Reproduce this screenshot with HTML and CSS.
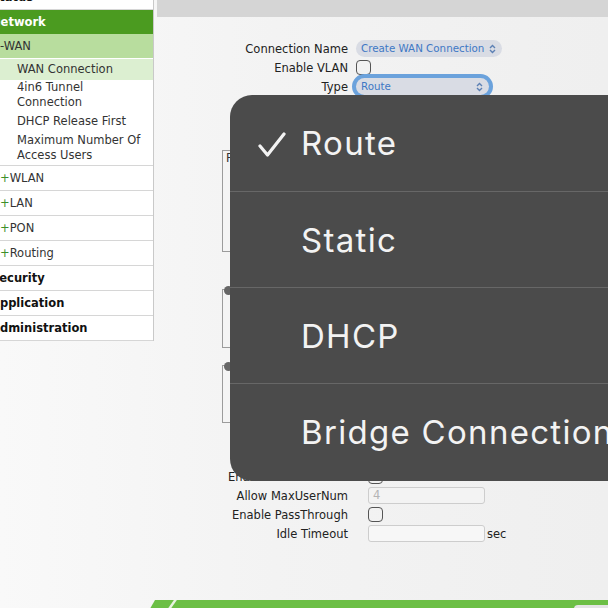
FILE: index.html
```html
<!DOCTYPE html>
<html lang="en">
  <head>
    <title>WAN Connection</title>
    <link rel="stylesheet" href="styles.css">
  </head>
  <body>
    <div class="page">
      <div class="nav">
        <div class="nav-top">Status</div>
        <div class="nav-top active">Network</div>
        <div class="nav-sub open">-WAN</div>
        <ul class="nav-leaf">
          <li class="current">WAN Connection</li>
          <li>4in6 Tunnel<br>Connection</li>
          <li>DHCP Release First</li>
          <li>Maximum Number Of<br>Access Users</li>
        </ul>
        <div class="nav-sub"><span class="plus">+</span>WLAN</div>
        <div class="nav-sub"><span class="plus">+</span>LAN</div>
        <div class="nav-sub"><span class="plus">+</span>PON</div>
        <div class="nav-sub"><span class="plus">+</span>Routing</div>
        <div class="nav-top">Security</div>
        <div class="nav-top">Application</div>
        <div class="nav-top last">Administration</div>
      </div>

      <div class="main">
        <div class="path">Path:Internet-WAN-WAN Connection</div>

        <div class="form">
          <div class="row">
            <label>Connection Name</label>
            <div class="select wide">Create WAN Connection
              <svg class="updown" width="7" height="10" viewBox="0 0 7 10"><polyline points="1,4 3.5,1.5 6,4"/><polyline points="1,6 3.5,8.5 6,6"/></svg>
            </div>
          </div>
          <div class="row">
            <label>Enable VLAN</label>
            <span class="check"></span>
          </div>
          <div class="row">
            <label>Type</label>
            <div class="select focus">Route
              <svg class="updown" width="7" height="10" viewBox="0 0 7 10"><polyline points="1,4 3.5,1.5 6,4"/><polyline points="1,6 3.5,8.5 6,6"/></svg>
            </div>
          </div>

          <div class="group g1"><span class="legend">PPP</span></div>
          <div class="group g2"><span class="dot"></span></div>
          <div class="group g3"><span class="dot"></span></div>

          <div class="lower">
            <div class="row low">
              <label>Enable MaxUserNum</label>
              <span class="check"></span>
            </div>
            <div class="row low">
              <label>Allow MaxUserNum</label>
              <span class="input disabled">4</span>
            </div>
            <div class="row low">
              <label>Enable PassThrough</label>
              <span class="check"></span>
            </div>
            <div class="row low">
              <label>Idle Timeout</label>
              <span class="field"><span class="input"></span>sec</span>
            </div>
          </div>
        </div>

        <div class="foot"></div>
      </div>
    </div>

    <div class="popup">
      <div class="option picked">
        <svg class="tick" width="28" height="26" viewBox="0 0 28 26"><polyline points="2,14 9.5,23 26,2"/></svg>
        Route
      </div>
      <div class="option">Static</div>
      <div class="option">DHCP</div>
      <div class="option">Bridge Connection</div>
    </div>
  </body>
</html>
```

FILE: styles.css
```css
html, body { margin: 0; width: 608px; height: 608px; overflow: hidden; }
body { background: linear-gradient(90deg, #f9f9f9 0%, #f3f3f3 45%, #efefef 100%); font-family: "DejaVu Sans", Verdana, sans-serif; font-size: 11.5px; color: #222; }

.page { display: flex; margin-top: -15px; align-items: flex-start; }

/* left menu */
.nav { box-sizing: border-box; width: 164px; margin-left: -10px; background: #fff; border-right: 1px solid #c9c9c9; }
.nav-top { height: 24px; line-height: 25px; padding-left: 1px; font-weight: bold; color: #111; border-bottom: 1px solid #d6d6d6; }
.nav-top.active { background: #4b9b20; color: #fff; border-bottom: 0; }
.nav-sub { height: 24px; line-height: 24px; padding-left: 10px; color: #333; border-bottom: 1px solid #d6d6d6; }
.nav-sub.open { background: #b8dd9e; border-bottom: 0; }
.plus { color: #3d8f2a; }
.nav-leaf { list-style: none; margin: 0; padding: 1px 0 0; border-bottom: 1px solid #d6d6d6; }
.nav-leaf li { padding: 2px 0 2px 27px; line-height: 15px; color: #333; }
.nav-leaf li.current { background: #dcefd1; padding: 3px 0 3px 27px; margin-bottom: -2px; }

/* main */
.main { flex: 1; margin-left: 3px; }
.path { height: 32px; background: #d5d5d5; box-sizing: border-box; padding: 3px 0 0 10px; line-height: 14px; font-weight: bold; color: #333; }
.form { padding-top: 23px; }
.row { display: grid; grid-template-columns: 191px auto; column-gap: 8px; align-items: center; height: 17px; margin-bottom: 2px; }
.row label { text-align: right; white-space: nowrap; }
.row.low { column-gap: 20px; }

.select { position: relative; box-sizing: border-box; width: 146px; height: 17px; line-height: 17px; padding-left: 5px; border-radius: 9px; background: #d9dce4; color: #3e78c4; font-size: 10.3px; }
.select.focus { width: 133px; box-shadow: 0 0 0 4px #6ba2dc; }
.updown { position: absolute; right: 6px; top: 4px; fill: none; stroke: #5c80b4; stroke-width: 1.4; }

.check { display: block; box-sizing: border-box; width: 15px; height: 15px; border: 1.5px solid #555; border-radius: 4px; }

.group { position: relative; box-sizing: border-box; margin-left: 65px; width: 320px; border: 1px solid #9b9b9b; }
.g1 { margin-top: 55px; height: 102px; }
.g2 { margin-top: 37px; height: 59px; }
.g3 { margin-top: 17px; height: 58px; }
.legend { position: absolute; left: 3px; top: 0; color: #333; }
.dot { position: absolute; left: 1px; top: -4px; width: 9px; height: 9px; border-radius: 50%; background: #666; }

.lower { margin-top: 45px; }
.input { display: block; box-sizing: border-box; width: 117px; height: 17px; line-height: 15px; padding-left: 4px; border: 1px solid #cdcdcd; border-radius: 3px; background: #f7f7f7; }
.input.disabled { color: #b4b4b4; background: #f3f3f3; }
.field { display: flex; align-items: center; gap: 2px; }

.foot { position: relative; height: 14px; margin: 58px 0 0 -10px; background: #6cbf45; clip-path: polygon(8px 0, 100% 0, 100% 100%, 0 100%); }
.foot::before { content: ""; position: absolute; left: 22px; top: 0; width: 3px; height: 14px; background: #e8f3e0; transform: skewX(-35deg); }
.foot::after { content: ""; position: absolute; right: 0; top: 5px; width: 34px; height: 12px; border-radius: 4px 0 0 0; background: #e4e4e4; }

/* open select menu */
.popup { position: absolute; left: 230px; top: 95px; width: 420px; height: 386px; border-radius: 22px; background: #4b4b4b; overflow: hidden; font-family: Inter, "Noto Sans", sans-serif; font-size: 33px; letter-spacing: 1.3px; color: #f3f3f3; }
.option { position: relative; box-sizing: border-box; height: 96px; line-height: 96px; padding-left: 71px; border-top: 1px solid #676767; white-space: nowrap; }
.option.picked { border-top: 0; height: 96px; }
.tick { position: absolute; left: 28px; top: 37px; fill: none; stroke: #f3f3f3; stroke-width: 3.2; stroke-linecap: round; stroke-linejoin: round; }
```
